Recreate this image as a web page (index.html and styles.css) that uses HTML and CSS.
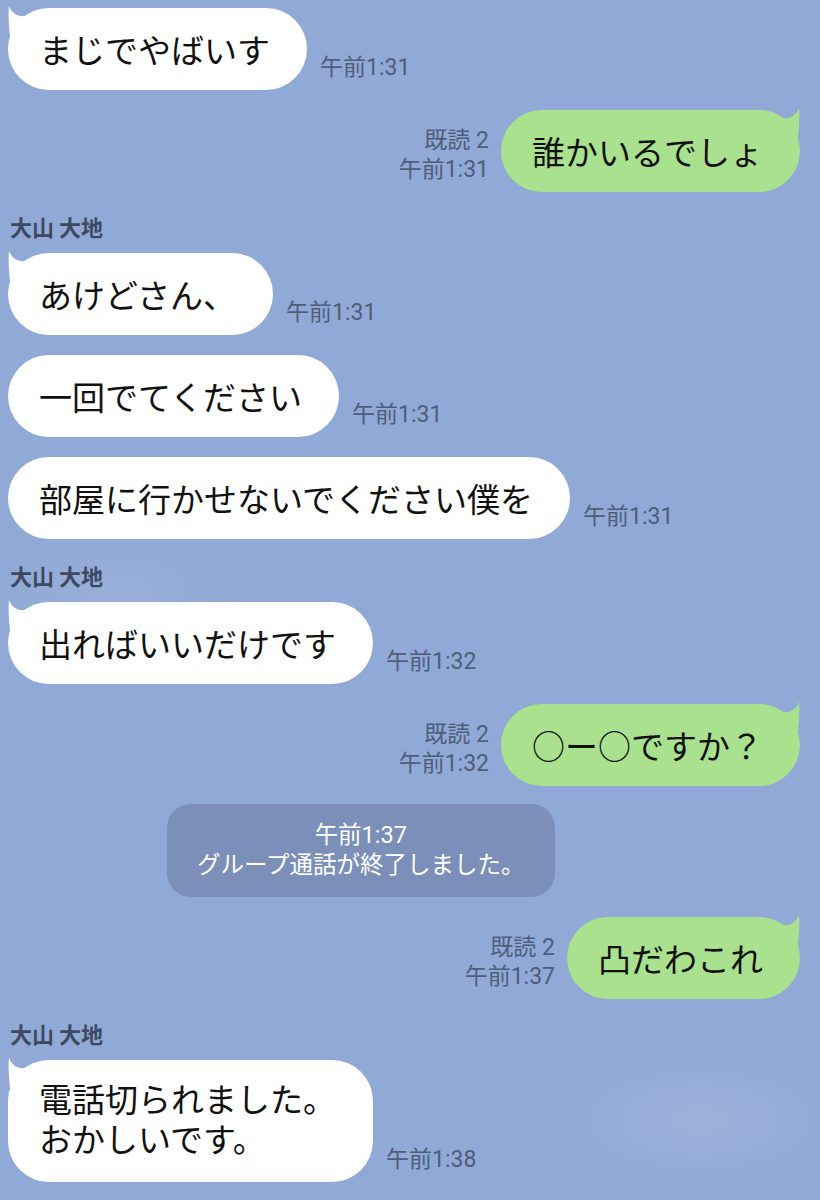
FILE: index.html
```html
<!DOCTYPE html>
<html lang="ja">
<head>
    <meta charset="UTF-8">
    <meta name="viewport" content="width=device-width, initial-scale=1.0">
    <title>トーク</title>
    <link rel="stylesheet" href="styles.css">
</head>
<body>
    <div class="chat">
        <div class="row in">
            <div class="bubble">
                <svg class="tail" width="26" height="30" viewBox="0 0 26 30"><path d="M1 0 C4 7 9 11 17 10 L17 30 L2 30 C1 20 0 8 1 0 Z"/></svg>
                まじでやばいす
            </div>
            <div class="meta">午前1:31</div>
        </div>

        <div class="row out">
            <div class="meta">既読 2<br>午前1:31</div>
            <div class="bubble">
                <svg class="tail" width="26" height="30" viewBox="0 0 26 30"><path d="M1 0 C4 7 9 11 17 10 L17 30 L2 30 C1 20 0 8 1 0 Z"/></svg>
                誰かいるでしょ
            </div>
        </div>

        <div class="name">大山 大地</div>
        <div class="row in">
            <div class="bubble">
                <svg class="tail" width="26" height="30" viewBox="0 0 26 30"><path d="M1 0 C4 7 9 11 17 10 L17 30 L2 30 C1 20 0 8 1 0 Z"/></svg>
                あけどさん、
            </div>
            <div class="meta">午前1:31</div>
        </div>
        <div class="row in">
            <div class="bubble">一回でてください</div>
            <div class="meta">午前1:31</div>
        </div>
        <div class="row in">
            <div class="bubble">部屋に行かせないでください僕を</div>
            <div class="meta">午前1:31</div>
        </div>

        <div class="name">大山 大地</div>
        <div class="row in">
            <div class="bubble">
                <svg class="tail" width="26" height="30" viewBox="0 0 26 30"><path d="M1 0 C4 7 9 11 17 10 L17 30 L2 30 C1 20 0 8 1 0 Z"/></svg>
                出ればいいだけです
            </div>
            <div class="meta">午前1:32</div>
        </div>

        <div class="row out">
            <div class="meta">既読 2<br>午前1:32</div>
            <div class="bubble">
                <svg class="tail" width="26" height="30" viewBox="0 0 26 30"><path d="M1 0 C4 7 9 11 17 10 L17 30 L2 30 C1 20 0 8 1 0 Z"/></svg>
                ○ー○ですか？
            </div>
        </div>

        <div class="row system">
            <div class="notice">午前1:37<br>グループ通話が終了しました。</div>
        </div>

        <div class="row out">
            <div class="meta">既読 2<br>午前1:37</div>
            <div class="bubble">
                <svg class="tail" width="26" height="30" viewBox="0 0 26 30"><path d="M1 0 C4 7 9 11 17 10 L17 30 L2 30 C1 20 0 8 1 0 Z"/></svg>
                凸だわこれ
            </div>
        </div>

        <div class="name">大山 大地</div>
        <div class="row in">
            <div class="bubble">
                <svg class="tail" width="26" height="30" viewBox="0 0 26 30"><path d="M1 0 C4 7 9 11 17 10 L17 30 L2 30 C1 20 0 8 1 0 Z"/></svg>
                <p>電話切られました。</p>
                <p>おかしいです。</p>
            </div>
            <div class="meta">午前1:38</div>
        </div>
    </div>
</body>
</html>
```

FILE: styles.css
```css
* {
    margin: 0;
    padding: 0;
    box-sizing: border-box;
    font-family: Roboto, "Noto Sans CJK JP", sans-serif;
}
body {
    min-height: 1200px;
    background-color: #91a9d6;
    background-image:
        radial-gradient(ellipse 160px 70px at 700px 1120px, rgba(255, 255, 255, 0.10), transparent),
        radial-gradient(ellipse 120px 60px at 120px 590px, rgba(255, 255, 255, 0.07), transparent);
    overflow: hidden;
}
.chat {
    display: flex;
    flex-direction: column;
    padding: 8px 20px 0 8px;
}
.row {
    display: flex;
    align-items: flex-end;
    margin-bottom: 20px;
}
.row.out {
    justify-content: flex-end;
    margin-bottom: 18px;
}
.bubble {
    position: relative;
    padding: 21px 37px 21px 31px;
    font-family: "Noto Sans CJK JP", sans-serif;
    font-size: 33px;
    line-height: 40px;
    color: #111;
    background: #fff;
    border-radius: 41px;
    white-space: nowrap;
}
.out .bubble {
    background: #a9e18f;
}
.tail {
    position: absolute;
    top: -2px;
    left: 0;
    fill: #fff;
}
.out .tail {
    left: auto;
    right: 0;
    transform: scaleX(-1);
    fill: #a9e18f;
}
.meta {
    padding-bottom: 8px;
    font-size: 23px;
    line-height: 29px;
    color: #4f5d7b;
    white-space: nowrap;
}
.in .meta {
    margin-left: 13px;
}
.out .meta {
    margin-right: 12px;
    text-align: right;
}
.name {
    margin-top: 3px;
    margin-bottom: 14px;
    padding-left: 2px;
    font-family: "Noto Sans CJK JP", sans-serif;
    font-size: 22px;
    font-weight: bold;
    line-height: 26px;
    color: #3d4963;
}
.system {
    padding-left: 159px;
    margin-bottom: 20px;
}
.notice {
    padding: 16px 30px 17px;
    font-size: 23.5px;
    line-height: 30px;
    color: #fff;
    text-align: center;
    background: #7b8fb9;
    border-radius: 24px;
}
```
